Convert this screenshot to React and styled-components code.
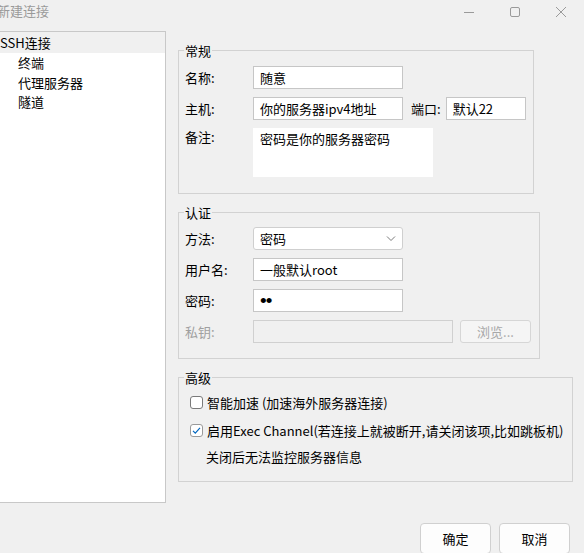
import React from 'react';
import styled, { createGlobalStyle } from 'styled-components';

const GlobalStyle = createGlobalStyle`
  html, body {
    margin: 0;
    padding: 0;
    background: #f0f0f0;
    overflow: hidden;
  }
  body {
    font-family: "Noto Sans CJK SC", "Noto Sans", sans-serif;
    font-size: 13px;
    color: #000;
  }
`;

const treeItems = [
  { label: 'SSH连接', level: 0, selected: true },
  { label: '终端', level: 1 },
  { label: '代理服务器', level: 1 },
  { label: '隧道', level: 1 },
];

const App = () => {
  return (
    <Window>
      <GlobalStyle />
      <TitleBar>
        <Title>新建连接</Title>
        <Controls>
          <ControlButton>
            <svg width="12" height="12" viewBox="0 0 12 12">
              <path d="M1 6.5h10" stroke="#9a9a9a" strokeWidth="1" />
            </svg>
          </ControlButton>
          <ControlButton>
            <svg width="12" height="12" viewBox="0 0 12 12">
              <rect x="1.5" y="1.5" width="9" height="9" rx="1.5" fill="none" stroke="#9a9a9a" strokeWidth="1" />
            </svg>
          </ControlButton>
          <ControlButton>
            <svg width="12" height="12" viewBox="0 0 12 12">
              <path d="M1 1l10 10M11 1L1 11" stroke="#9a9a9a" strokeWidth="1" />
            </svg>
          </ControlButton>
        </Controls>
      </TitleBar>

      <Body>
        <Tree>
          {treeItems.map((item) => (
            <TreeItem key={item.label} level={item.level} selected={item.selected}>
              {item.label}
            </TreeItem>
          ))}
        </Tree>

        <Content>
          <Group width={356} padBottom={16}>
            <Legend>常规</Legend>
            <Row>
              <Label>名称:</Label>
              <TextBox width={150}>随意</TextBox>
            </Row>
            <Row>
              <Label>主机:</Label>
              <TextBox width={150}>你的服务器ipv4地址</TextBox>
              <PortLabel>端口:</PortLabel>
              <TextBox width={80}>默认22</TextBox>
            </Row>
            <Row top>
              <Label>备注:</Label>
              <Memo>密码是你的服务器密码</Memo>
            </Row>
          </Group>

          <Group width={362} padTop={6} padBottom={15}>
            <Legend>认证</Legend>
            <Row>
              <Label>方法:</Label>
              <Select>
                <span>密码</span>
                <svg width="10" height="6" viewBox="0 0 10 6">
                  <path d="M1 0.5l4 4 4-4" fill="none" stroke="#7a7a7a" strokeWidth="1" />
                </svg>
              </Select>
            </Row>
            <Row>
              <Label>用户名:</Label>
              <TextBox width={150}>一般默认root</TextBox>
            </Row>
            <Row>
              <Label>密码:</Label>
              <TextBox width={150}>
                <Dots>••</Dots>
              </TextBox>
            </Row>
            <Row>
              <Label disabled>私钥:</Label>
              <TextBox width={200} disabled />
              <BrowseButton>浏览...</BrowseButton>
            </Row>
          </Group>

          <Group width={395} advanced padTop={2} padBottom={9}>
            <Legend>高级</Legend>
            <CheckRow>
              <Checkbox />
              智能加速 (加速海外服务器连接)
            </CheckRow>
            <CheckRow>
              <Checkbox checked>
                <svg width="11" height="11" viewBox="0 0 11 11">
                  <path d="M2 5.8l2.3 2.4L9 2.8" fill="none" stroke="#0067c0" strokeWidth="1.2" />
                </svg>
              </Checkbox>
              启用Exec Channel(若连接上就被断开,请关闭该项,比如跳板机)
            </CheckRow>
            <Note>关闭后无法监控服务器信息</Note>
          </Group>
        </Content>
      </Body>

      <Footer>
        <DialogButton>确定</DialogButton>
        <DialogButton>取消</DialogButton>
      </Footer>
    </Window>
  );
};

const Window = styled.div`
  width: 584px;
  height: 553px;
  display: flex;
  flex-direction: column;
  background: #f0f0f0;
  overflow: hidden;
`;

const TitleBar = styled.div`
  height: 31px;
  display: flex;
  align-items: flex-start;
  justify-content: space-between;
  flex-shrink: 0;
`;

const Title = styled.div`
  margin-left: -3px;
  padding-top: 2px;
  font-size: 13px;
  line-height: 18px;
  color: #9a9a9a;
`;

const Controls = styled.div`
  display: flex;
`;

const ControlButton = styled.div`
  width: 46px;
  height: 24px;
  display: flex;
  align-items: center;
  justify-content: center;
`;

const Body = styled.div`
  display: flex;
  align-items: flex-start;
  gap: 12px;
`;

const Tree = styled.div`
  width: 172px;
  height: 472px;
  margin-left: -6px;
  background: #fff;
  border: 1px solid #c8c8c8;
  flex-shrink: 0;
  box-sizing: border-box;
`;

const TreeItem = styled.div`
  height: ${(p) => (p.selected ? '21px' : '19.5px')};
  line-height: ${(p) => (p.selected ? '21px' : '19.5px')};
  padding-left: ${(p) => 5 + p.level * 18}px;
  background: ${(p) => (p.selected ? '#f0f0f0' : 'transparent')};
  white-space: nowrap;
`;

const Content = styled.div`
  display: flex;
  flex-direction: column;
  gap: 10px;
  padding-top: 11px;
`;

const Group = styled.fieldset`
  width: ${(p) => p.width}px;
  margin: 0;
  padding: ${(p) => p.padTop ?? 7}px 6px ${(p) => p.padBottom}px 6px;
  border: 1px solid #d2d2d2;
  box-sizing: border-box;
  display: flex;
  flex-direction: column;
  gap: ${(p) => (p.advanced ? '0' : '8px')};
  min-width: 0;
`;

const Legend = styled.legend`
  padding: 0 1px;
  margin-left: -1px;
  font-size: 13px;
  line-height: 17px;
`;

const Row = styled.div`
  display: flex;
  align-items: ${(p) => (p.top ? 'flex-start' : 'center')};
`;

const Label = styled.div`
  width: 68px;
  flex-shrink: 0;
  line-height: 18px;
  color: ${(p) => (p.disabled ? '#a0a0a0' : '#000')};
`;

const PortLabel = styled.div`
  margin: 0 5px 0 8px;
  line-height: 18px;
`;

const TextBox = styled.div`
  width: ${(p) => p.width}px;
  height: 23px;
  box-sizing: border-box;
  padding: 0 6px;
  display: flex;
  align-items: center;
  background: ${(p) => (p.disabled ? '#f0f0f0' : '#fff')};
  border: 1px solid ${(p) => (p.disabled ? '#d0d0d0' : '#c6c6c6')};
  white-space: nowrap;
  overflow: hidden;
`;

const Dots = styled.span`
  font-family: "Liberation Sans", sans-serif;
  font-size: 19px;
  letter-spacing: -1px;
  line-height: 1;
`;

const Memo = styled.div`
  width: 180px;
  height: 49px;
  box-sizing: border-box;
  padding: 2px 7px;
  background: #fff;
  line-height: 18px;
`;

const Select = styled.div`
  width: 150px;
  height: 23px;
  box-sizing: border-box;
  padding: 0 6px;
  display: flex;
  align-items: center;
  justify-content: space-between;
  background: #fff;
  border: 1px solid #cfcfcf;
  border-radius: 3px;
`;

const BrowseButton = styled.div`
  width: 71px;
  height: 23px;
  margin-left: 7px;
  box-sizing: border-box;
  display: flex;
  align-items: center;
  justify-content: center;
  border: 1px solid #d6d6d6;
  border-radius: 3px;
  background: #f5f5f5;
  color: #a8a8a8;
`;

const CheckRow = styled.div`
  height: 28px;
  display: flex;
  align-items: center;
  padding-left: 5px;
  gap: 4px;
  white-space: nowrap;
`;

const Checkbox = styled.div`
  width: 13px;
  height: 13px;
  box-sizing: border-box;
  border: 1px solid ${(p) => (p.checked ? '#9a9a9a' : '#7a7a7a')};
  border-radius: 3px;
  background: #fff;
  display: flex;
  align-items: center;
  justify-content: center;
  flex-shrink: 0;
`;

const Note = styled.div`
  height: 28px;
  line-height: 26px;
  padding-left: 21px;
`;

const Footer = styled.div`
  display: flex;
  justify-content: flex-end;
  gap: 8px;
  margin-top: auto;
  margin-bottom: -1px;
  padding-right: 14px;
`;

const DialogButton = styled.div`
  width: 71px;
  height: 31px;
  box-sizing: border-box;
  display: flex;
  align-items: center;
  justify-content: center;
  background: #fdfdfd;
  border: 1px solid #d0d0d0;
  border-radius: 4px;
`;

export default App;
